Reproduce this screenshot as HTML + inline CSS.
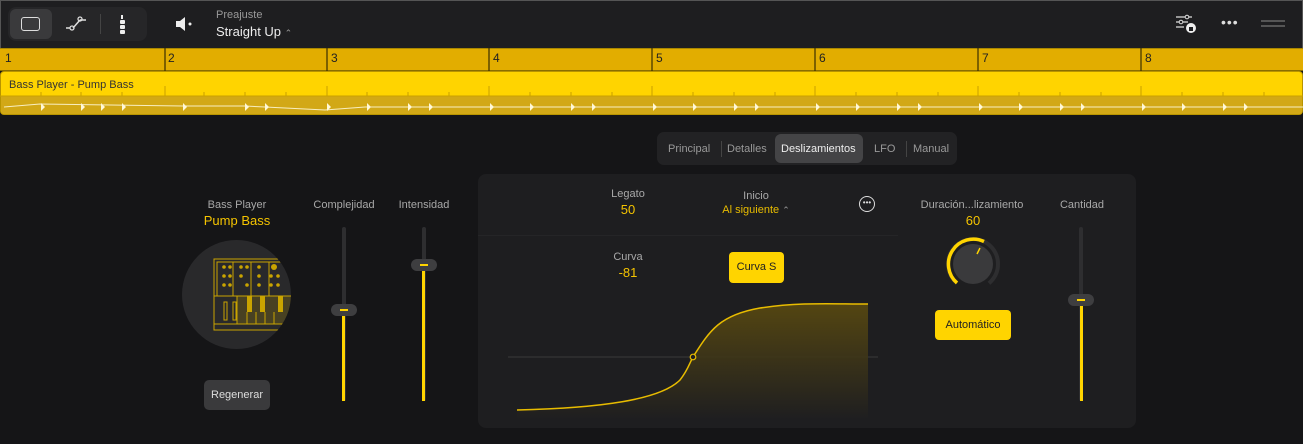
<!DOCTYPE html>
<html><head><meta charset="utf-8"><style>
*{margin:0;padding:0;box-sizing:border-box}
body{width:1303px;height:444px;background:#151517;font-family:"Liberation Sans",sans-serif;position:relative;overflow:hidden;color:#aaa}
.a{position:absolute}
.lbl{font-size:11px;color:#a8a8a8;text-align:center}
.val{font-size:13px;color:#f5c400;text-align:center}
.track{position:absolute;width:4px;background:#2e2e30;border-radius:2px}
.fill{position:absolute;width:3px;background:#ffd400}
.thumb{position:absolute;width:26px;height:12px;background:#3e3e40;border-radius:6px}
.thumb:after{content:"";position:absolute;left:9px;top:5px;width:8px;height:1.5px;background:#ffd400}
</style></head><body>
<div class="a" style="left:0;top:0;width:1303px;height:48px;background:#1e1e20;border-top:1px solid #555;border-left:1px solid #555;border-right:1px solid #555"></div>
<div class="a" style="left:8px;top:7px;width:139px;height:34px;background:#262628;border-radius:8px"></div>
<div class="a" style="left:10px;top:9px;width:42px;height:30px;background:#3a3a3c;border-radius:6px"></div>
<div class="a" style="left:21px;top:17px;width:19px;height:14px;border:1.5px solid #ddd;border-radius:3px"></div>
<svg class="a" style="left:64px;top:12px" width="26" height="24"><path d="M2 16h4M9 16l7-8M16 8h6" stroke="#ddd" stroke-width="1.5" fill="none"/><circle cx="8" cy="16" r="2" stroke="#ddd" fill="none" stroke-width="1.3"/><circle cx="16" cy="7" r="2" stroke="#ddd" fill="none" stroke-width="1.3"/></svg>
<div class="a" style="left:100px;top:14px;width:1px;height:20px;background:#444"></div>
<svg class="a" style="left:118px;top:14px" width="10" height="22"><rect x="3" y="1" width="2" height="4" fill="#eee"/><rect x="2" y="6" width="5" height="4" rx="1" fill="#eee"/><rect x="2" y="11" width="5" height="4" rx="1" fill="#eee"/><rect x="2" y="16" width="5" height="4" rx="1" fill="#eee"/></svg>
<svg class="a" style="left:174px;top:15px" width="20" height="18"><path d="M2 6h4l5-4v14l-5-4H2z" fill="#eee"/><circle cx="16" cy="9" r="1.5" fill="#eee"/></svg>
<div class="a" style="left:216px;top:9px;font-size:11px;color:#999">Preajuste</div>
<div class="a" style="left:216px;top:24px;font-size:13px;color:#eee">Straight Up <span style="font-size:9px;color:#999">⌃</span></div>
<svg class="a" style="left:1174px;top:13px" width="24" height="22"><path d="M2 4h16M2 9h12M2 14h8" stroke="#ddd" stroke-width="1.3"/><circle cx="13" cy="4" r="1.8" fill="#1e1e20" stroke="#ddd"/><circle cx="7" cy="9" r="1.8" fill="#1e1e20" stroke="#ddd"/><circle cx="17" cy="15" r="5" fill="#eee"/><rect x="15" y="14" width="4" height="4" fill="#1e1e20"/></svg>
<div class="a" style="left:1221px;top:14px;font-size:14px;color:#ddd;letter-spacing:1px">•••</div>
<div class="a" style="left:1261px;top:20px;width:24px;height:2px;background:#555"></div>
<div class="a" style="left:1261px;top:25px;width:24px;height:2px;background:#555"></div>
<div class="a" style="left:0;top:48px;width:1303px;height:23px;background:#e2ad00;border-top:1px solid #aa8800;border-bottom:1px solid #8a6e00"></div>
<div class="a" style="left:0;top:71px;width:1303px;height:44px;background:#ffd400;border-radius:4px;border:1px solid #b89400;overflow:hidden"><div class="a" style="left:0;top:24px;width:1303px;height:20px;background:#d2a816"></div></div>
<svg class="a" style="left:0;top:48px" width="1303" height="68">
<g stroke="#3a2e00" stroke-width="1.2">
<line x1="165" y1="0" x2="165" y2="23"/><line x1="327" y1="0" x2="327" y2="23"/><line x1="489" y1="0" x2="489" y2="23"/><line x1="652" y1="0" x2="652" y2="23"/><line x1="815" y1="0" x2="815" y2="23"/><line x1="978" y1="0" x2="978" y2="23"/><line x1="1141" y1="0" x2="1141" y2="23"/></g>
<g stroke="#c9a000" stroke-width="1">
<path d="M0 48h1303"/>
<path d="M41 44v4M81 44v4M122 44v4M165 38v10M204 44v4M245 44v4M286 44v4M327 38v10M367 44v4M408 44v4M449 44v4M489 38v10M530 44v4M571 44v4M612 44v4M652 38v10M693 44v4M734 44v4M775 44v4M815 38v10M856 44v4M897 44v4M938 44v4M978 38v10M1019 44v4M1060 44v4M1101 44v4M1141 38v10M1182 44v4M1223 44v4M1264 44v4"/></g>
<g fill="#222" font-size="12" font-family="Liberation Sans"><text x="5" y="14">1</text><text x="168" y="14">2</text><text x="331" y="14">3</text><text x="493" y="14">4</text><text x="656" y="14">5</text><text x="819" y="14">6</text><text x="982" y="14">7</text><text x="1145" y="14">8</text></g>
<text x="9" y="40" font-size="11" fill="#333" font-family="Liberation Sans">Bass Player - Pump Bass</text>
<path d="M4 59 L40 56 L183 58 L245 58 L265 59 L325 62 L365 59 L1303 59" stroke="#f8eec0" stroke-width="1" fill="none"/>
<g fill="#fff8d8">
<path d="M41 55l4 4-4 4z"/><path d="M81 55l4 4-4 4z"/><path d="M101 55l4 4-4 4z"/><path d="M122 55l4 4-4 4z"/><path d="M183 55l4 4-4 4z"/><path d="M245 55l4 4-4 4z"/><path d="M265 55l4 4-4 4z"/><path d="M327 55l4 4-4 4z"/><path d="M367 55l4 4-4 4z"/><path d="M408 55l4 4-4 4z"/><path d="M429 55l4 4-4 4z"/><path d="M490 55l4 4-4 4z"/><path d="M530 55l4 4-4 4z"/><path d="M571 55l4 4-4 4z"/><path d="M592 55l4 4-4 4z"/><path d="M653 55l4 4-4 4z"/><path d="M693 55l4 4-4 4z"/><path d="M734 55l4 4-4 4z"/><path d="M755 55l4 4-4 4z"/><path d="M816 55l4 4-4 4z"/><path d="M856 55l4 4-4 4z"/><path d="M897 55l4 4-4 4z"/><path d="M918 55l4 4-4 4z"/><path d="M979 55l4 4-4 4z"/><path d="M1019 55l4 4-4 4z"/><path d="M1060 55l4 4-4 4z"/><path d="M1081 55l4 4-4 4z"/><path d="M1142 55l4 4-4 4z"/><path d="M1182 55l4 4-4 4z"/><path d="M1223 55l4 4-4 4z"/><path d="M1244 55l4 4-4 4z"/></g>
</svg>
<div class="a" style="left:657px;top:132px;width:300px;height:33px;background:#222224;border-radius:7px"></div>
<div class="a" style="left:775px;top:134px;width:88px;height:29px;background:#444446;border-radius:6px"></div>
<div class="a" style="left:668px;top:143px;font-size:11px;color:#999">Principal</div>
<div class="a" style="left:721px;top:141px;width:1px;height:16px;background:#444"></div>
<div class="a" style="left:727px;top:143px;font-size:11px;color:#999">Detalles</div>
<div class="a" style="left:781px;top:143px;font-size:11px;color:#eee">Deslizamientos</div>
<div class="a" style="left:874px;top:143px;font-size:11px;color:#999">LFO</div>
<div class="a" style="left:906px;top:141px;width:1px;height:16px;background:#444"></div>
<div class="a" style="left:913px;top:143px;font-size:11px;color:#999">Manual</div>
<div class="a lbl" style="left:187px;top:199px;width:100px">Bass Player</div>
<div class="a" style="left:187px;top:213px;width:100px;text-align:center;font-size:13px;color:#f5c400">Pump Bass</div>
<div class="a" style="left:182px;top:240px;width:109px;height:109px;border-radius:50%;background:#29292b;overflow:hidden">
<svg width="109" height="109"><g stroke="#c9a400" fill="none" stroke-width="1"><rect x="32" y="19" width="80" height="71"/><rect x="35" y="22" width="80" height="34"/><line x1="32" y1="56" x2="112" y2="56"/><line x1="51" y1="22" x2="51" y2="56"/><line x1="69" y1="22" x2="69" y2="56"/><line x1="87" y1="22" x2="87" y2="56"/><line x1="32" y1="84" x2="112" y2="84"/><line x1="55" y1="56" x2="55" y2="84"/><line x1="65" y1="72" x2="65" y2="84"/><line x1="74" y1="72" x2="74" y2="84"/><line x1="83" y1="72" x2="83" y2="84"/><line x1="92" y1="72" x2="92" y2="84"/><rect x="42" y="62" width="3" height="18"/><rect x="51" y="62" width="3" height="18"/></g>
<rect x="55" y="56" width="57" height="28" fill="#c9a400" opacity="0.2"/>
<g fill="#c9a400"><rect x="65" y="56" width="5" height="16"/><rect x="78" y="56" width="5" height="16"/><rect x="96" y="56" width="5" height="16"/><circle cx="42" cy="27" r="1.8"/><circle cx="48" cy="27" r="1.8"/><circle cx="42" cy="36" r="1.8"/><circle cx="48" cy="36" r="1.8"/><circle cx="42" cy="45" r="1.8"/><circle cx="48" cy="45" r="1.8"/><circle cx="59" cy="27" r="1.8"/><circle cx="65" cy="27" r="1.8"/><circle cx="59" cy="36" r="1.8"/><circle cx="65" cy="45" r="1.8"/><circle cx="77" cy="27" r="1.8"/><circle cx="77" cy="36" r="1.8"/><circle cx="77" cy="45" r="1.8"/><circle cx="92" cy="27" r="3"/><circle cx="89" cy="36" r="1.8"/><circle cx="96" cy="36" r="1.8"/><circle cx="89" cy="45" r="1.8"/><circle cx="96" cy="45" r="1.8"/></g></svg></div>
<div class="a" style="left:204px;top:380px;width:66px;height:30px;background:#3a3a3c;border-radius:5px;font-size:11px;color:#ddd;text-align:center;line-height:30px">Regenerar</div>
<div class="a lbl" style="left:304px;top:199px;width:80px">Complejidad</div>
<div class="a lbl" style="left:384px;top:199px;width:80px">Intensidad</div>
<div class="track" style="left:342px;top:227px;height:174px"></div>
<div class="fill" style="left:342px;top:312px;height:89px"></div>
<div class="thumb" style="left:331px;top:304px"></div>
<div class="track" style="left:422px;top:227px;height:174px"></div>
<div class="fill" style="left:422px;top:267px;height:134px"></div>
<div class="thumb" style="left:411px;top:259px"></div>
<div class="a" style="left:478px;top:174px;width:658px;height:254px;background:#1e1e20;border-radius:8px"></div>
<div class="a" style="left:478px;top:235px;width:420px;height:1px;background:#252527"></div>
<div class="a lbl" style="left:598px;top:188px;width:60px">Legato</div>
<div class="a val" style="left:598px;top:202px;width:60px">50</div>
<div class="a lbl" style="left:716px;top:190px;width:80px">Inicio</div>
<div class="a" style="left:700px;top:204px;width:112px;text-align:center;font-size:11px;color:#e8bc00">Al siguiente <span style="color:#999;font-size:9px">⌃</span></div>
<div class="a" style="left:859px;top:196px;width:16px;height:16px;border:1.3px solid #ddd;border-radius:50%;font-size:8px;color:#ddd;text-align:center;line-height:11px">•••</div>
<div class="a lbl" style="left:598px;top:251px;width:60px">Curva</div>
<div class="a val" style="left:598px;top:265px;width:60px">-81</div>
<div class="a" style="left:729px;top:252px;width:55px;height:31px;background:#ffd400;border-radius:4px;font-size:11px;color:#222;text-align:center;line-height:31px">Curva S</div>
<svg class="a" style="left:500px;top:290px" width="390" height="130">
<defs><linearGradient id="g" x1="0" y1="0" x2="0" y2="1"><stop offset="0" stop-color="#5a4a10"/><stop offset="1" stop-color="#1e1e20"/></linearGradient></defs>
<line x1="8" y1="67" x2="378" y2="67" stroke="#3a3a3a"/>
<path d="M17 120 C100 118 160 110 180 90 C188 80 190 72 193 67 C210 40 220 25 260 18 C300 12 330 14 368 14 L368 130 L17 130Z" fill="url(#g)" opacity="0.9"/>
<path d="M17 120 C100 118 160 110 180 90 C188 80 190 72 193 67 C210 40 220 25 260 18 C300 12 330 14 368 14" stroke="#e8bc00" stroke-width="1.5" fill="none"/>
<circle cx="193" cy="67" r="2.8" fill="#1e1e20" stroke="#e8bc00" stroke-width="1.2"/>
</svg>
<div class="a lbl" style="left:912px;top:199px;width:120px">Duración...lizamiento</div>
<div class="a val" style="left:943px;top:213px;width:60px">60</div>
<svg class="a" style="left:944px;top:236px" width="58" height="54"><circle cx="29" cy="28" r="25" stroke="#2e2e30" stroke-width="4" fill="none" stroke-dasharray="120 200" transform="rotate(135 29 28)"/><path d="M13 47 A25 25 0 0 1 40 5.5" stroke="#ffd400" stroke-width="3.5" fill="none"/><circle cx="29" cy="28" r="20" fill="#3a3a3c"/><line x1="33" y1="18" x2="36" y2="12" stroke="#ffd400" stroke-width="1.5"/></svg>
<div class="a" style="left:935px;top:310px;width:76px;height:30px;background:#ffd400;border-radius:4px;font-size:11px;color:#222;text-align:center;line-height:30px">Automático</div>
<div class="a lbl" style="left:1042px;top:199px;width:80px">Cantidad</div>
<div class="track" style="left:1079px;top:227px;height:174px"></div>
<div class="fill" style="left:1080px;top:302px;height:99px"></div>
<div class="thumb" style="left:1068px;top:294px"></div>
</body></html>
